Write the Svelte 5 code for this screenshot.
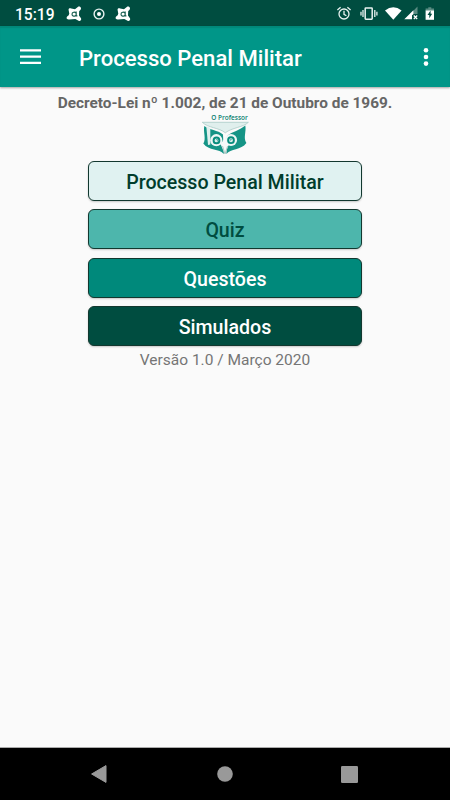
<script>
  const buttons = [
    { label: "Processo Penal Militar", style: "light" },
    { label: "Quiz", style: "soft" },
    { label: "Questões", style: "strong" },
    { label: "Simulados", style: "dark" },
  ];
</script>

{#snippet avast()}
  <svg class="avast" width="16" height="16" viewBox="0 0 16 16">
    <path
      d="M2.6 4C2.3 2.4 3.8 1.8 5.2 2.6L9 3.2L11.8 .9C13 0 14.8 .7 15 2.2C15.1 3.4 14.3 4.3 13.2 5L13 9.6L15 12.2C15.8 13.8 14.2 15.5 12.6 14.7L9.3 13.1L3.2 13.4C1.5 13.7 .1 12.6 .7 11.2C1 10.3 1.8 10 2.7 9.2L3.3 7.4Z"
      fill="#fff" />
    <path d="M10.2 5.6V9.9H11.4M10 7.2C9 5.4 6 6 6 8.2S9 10.8 10 8.9" fill="none" stroke="#155c4f" stroke-width="1.1" />
  </svg>
{/snippet}

<div class="screen">
  <div class="status">
    <span class="time">15:19</span>
    {@render avast()}
    <svg class="ring" width="12" height="12" viewBox="0 0 12 12">
      <circle cx="6" cy="6" r="4.9" fill="none" stroke="#e8f2f0" stroke-width="1.4" />
      <circle cx="6" cy="6" r="2" fill="#fff" />
    </svg>
    {@render avast()}
    <svg class="system" width="100" height="18" viewBox="336 5 100 18">
      <g fill="none" stroke="#e8f2f0" stroke-width="1.3">
        <circle cx="344" cy="14" r="5" />
        <path d="M344 10.8V14.3L346.4 15.7M337.4 10L340.6 7.3M350.6 10L347.4 7.3" />
        <rect x="365.2" y="8" width="7" height="11.2" rx=".6" stroke-width="1.5" />
        <path d="M363 10V17M361 11.7V15.5M374.8 10V17M376.9 11.7V15.5" />
      </g>
      <path d="M385 10.4Q393.3 4.2 401.6 10.4L393.3 19.8Z" fill="#fff" />
      <path d="M417.5 6.5V14H411L410 14.3Z" fill="#5a8b82" />
      <path d="M404.3 19.3L413.4 10.2V14.2L412 15.2V19.3Z" fill="#fff" />
      <path d="M413.8 15.5L417.2 19M417.2 15.5L413.8 19" stroke="#fff" stroke-width="1.2" />
      <path d="M428.3 7.3H431.3V8.6H434V11H425.6V8.6H428.3Z" fill="#5a8b82" />
      <path d="M425.6 10.5H434V19.8H425.6Z" fill="#fff" />
      <path d="M430.6 10.5L427.5 15H429.3V18.3L432.2 13.7H430.6Z" fill="#004d40" />
    </svg>
  </div>

  <header>
    <svg class="menu" width="21" height="16" viewBox="0 0 21 16">
      <path d="M0 1.4H21M0 7.6H21M0 13.8H21" stroke="#fff" stroke-width="2.2" />
    </svg>
    <h1>Processo Penal Militar</h1>
    <svg class="more" width="6" height="20" viewBox="0 0 6 20">
      <g fill="#fff">
        <circle cx="3" cy="3.2" r="2.3" />
        <circle cx="3" cy="10" r="2.3" />
        <circle cx="3" cy="16.6" r="2.3" />
      </g>
    </svg>
  </header>

  <main>
    <p class="law">Decreto-Lei nº 1.002, de 21 de Outubro de 1969.</p>
    <svg class="logo" width="50" height="44" viewBox="200 112 50 44">
      <text x="211.3" y="120.2" textLength="36.5" lengthAdjust="spacingAndGlyphs">O Professor</text>
      <path
        d="M204.3 126C209 130 218 130 223 134.5L223.8 154C219.5 148.5 209 151 203.3 143.5C206.5 139 203 132 204.3 126Z"
        fill="#159486" />
      <path
        d="M245.3 125.5C240 130 232 132 227.5 135.5L226.4 154C230.5 148.5 241 150.5 246.4 143C243 138 246.5 132 245.3 125.5Z"
        fill="#159486" />
      <path d="M202.3 122.3H248.4C243 127.5 232 127.5 225.3 132.8C219 127.5 208 128 202.3 122.3Z" fill="#e0efed" stroke="#a2c6c1" stroke-width=".7" />
      <circle cx="216.3" cy="140.2" r="6.1" fill="#eff7f6" />
      <circle cx="231" cy="140" r="6.1" fill="#eff7f6" />
      <path d="M220.5 144L225 154.5L229 144L225 138Z" fill="#f6f9f9" />
      <path d="M222.5 146L225 154L227.6 146" fill="none" stroke="#8fb4af" stroke-width=".7" />
      <path d="M206.3 126L210.3 128V144.5L208 145Z" fill="#e0f0ee" />
      <circle cx="216.5" cy="140.4" r="2.9" fill="#d6edea" stroke="#078c7d" stroke-width="1.9" />
      <circle cx="231" cy="140.2" r="2.9" fill="#d6edea" stroke="#078c7d" stroke-width="1.9" />
      <path d="M216 139.5H217.5V141.5M230.2 141V139.5H231.8" fill="none" stroke="#4aa99e" stroke-width=".8" />
    </svg>
    <div class="buttons">
      {#each buttons as button}
        <button class={button.style}>{button.label}</button>
      {/each}
    </div>
    <p class="version">Versão 1.0 / Março 2020</p>
  </main>

  <nav>
    <svg width="16" height="18" viewBox="0 0 16 18">
      <path d="M15 .6V17.4L.6 9Z" fill="#999" stroke="#999" stroke-linejoin="round" />
    </svg>
    <svg class="home" width="16" height="16" viewBox="0 0 16 16">
      <circle cx="8" cy="8" r="7.8" fill="#999" />
    </svg>
    <svg width="17" height="17" viewBox="0 0 17 17">
      <rect width="17" height="17" rx="1.3" fill="#999" />
    </svg>
  </nav>
</div>

<style>
  :global(body) {
    margin: 0;
  }
  .screen {
    display: flex;
    flex-direction: column;
    width: 450px;
    height: 800px;
    overflow: hidden;
    background: #fafafa;
    font-family: Roboto, sans-serif;
  }
  svg {
    display: block;
    flex: none;
  }
  .status {
    display: flex;
    align-items: center;
    height: 26px;
    padding: 1px 14px 0 15px;
    box-sizing: border-box;
    background: #004d40;
    color: #fff;
  }
  .time {
    width: 51px;
    padding-top: 2px;
    font-size: 15.6px;
    font-weight: 500;
    line-height: 24px;
  }
  .ring {
    margin: 0 10.5px;
  }
  .system {
    margin-left: auto;
  }
  header {
    display: flex;
    align-items: center;
    position: relative;
    height: 61px;
    padding: 0 21px 0 20px;
    box-sizing: border-box;
    background: #009688;
    box-shadow: inset 0 2px 1px rgba(0, 60, 50, 0.15), 0 1px 2px rgba(0, 0, 0, 0.35);
  }
  h1 {
    flex: 1;
    margin: 2px 0 0 38px;
    color: #fff;
    font-size: 22.1px;
    font-weight: 500;
    line-height: 30px;
    white-space: nowrap;
  }
  main {
    display: flex;
    flex: 1;
    flex-direction: column;
    align-items: center;
  }
  p {
    margin: 0;
    white-space: nowrap;
  }
  .law {
    margin-top: 5.5px;
    color: #666;
    font-size: 15.4px;
    font-weight: 700;
    line-height: 20px;
  }
  .logo {
    margin-top: -0.5px;
  }
  .logo text {
    fill: #087f70;
    font: 600 6.4px "Open Sans", sans-serif;
  }
  .buttons {
    display: flex;
    flex-direction: column;
    gap: 8.9px;
    width: 274px;
    margin-top: 5px;
  }
  button {
    height: 39.6px;
    padding: 2px 0 0;
    border: 1.3px solid #12382f;
    border-radius: 6px;
    box-shadow: 0 1px 2px rgba(0, 0, 0, 0.2);
    font-family: inherit;
    font-size: 19.6px;
    font-weight: 500;
    line-height: 38px;
  }
  .light {
    background: #e0f2f1;
    color: #003d2c;
  }
  .soft {
    background: #4db6ac;
    color: #004d40;
  }
  .strong {
    background: #00897b;
    color: #fff;
  }
  .dark {
    background: #004d40;
    color: #fff;
  }
  .version {
    margin-top: 3.5px;
    color: #757575;
    font-size: 15.5px;
    line-height: 20px;
  }
  nav {
    display: flex;
    align-items: center;
    justify-content: space-between;
    height: 53px;
    padding: 0 92px 0 91px;
    box-sizing: border-box;
    border-top: 1px solid #aaa;
    background: #000;
  }
  .home {
    margin-left: 2px;
  }
</style>
